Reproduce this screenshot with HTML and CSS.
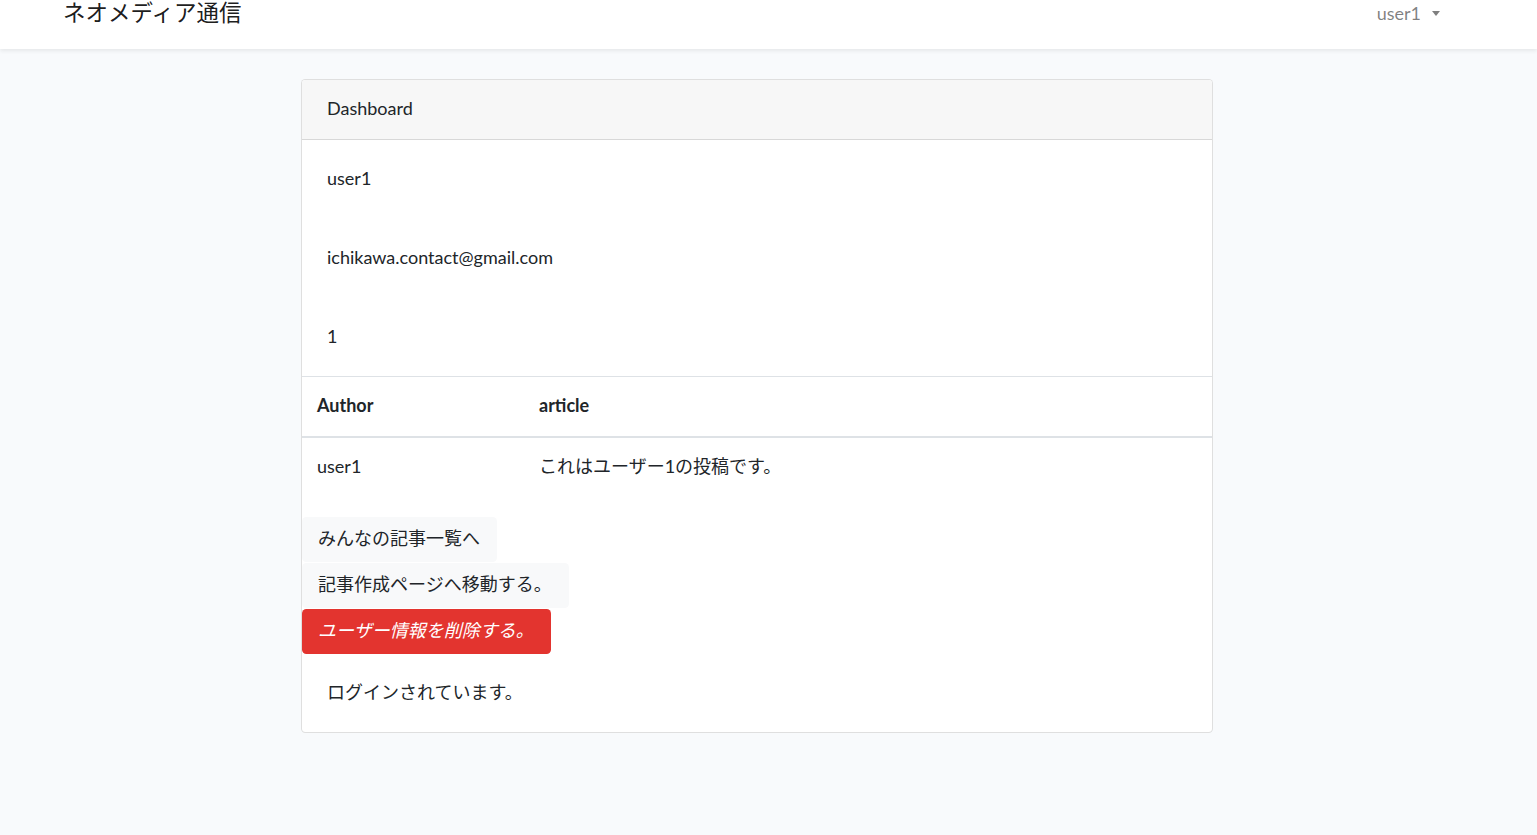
FILE: index.html
```html
<!DOCTYPE html>
<html lang="ja">
<head>
<meta charset="utf-8">
<title>ネオメディア通信</title>
<link rel="stylesheet" href="styles.css">
</head>
<body>
<nav class="navbar">
  <a class="brand" href="#">ネオメディア通信</a>
  <div class="user-menu">
    <span class="user-name">user1</span>
    <span class="caret"></span>
  </div>
</nav>
<main class="main">
  <div class="card">
    <div class="card-header">Dashboard</div>
    <div class="card-body info">
      <div class="line">user1</div>
      <div class="line">ichikawa.contact@gmail.com</div>
      <div class="line">1</div>
    </div>
    <table class="table">
      <thead>
        <tr><th class="col-author">Author</th><th>article</th></tr>
      </thead>
      <tbody>
        <tr><td class="col-author">user1</td><td>これはユーザー1の投稿です。</td></tr>
      </tbody>
    </table>
    <div class="actions">
      <a class="btn btn-light" href="#">みんなの記事一覧へ</a>
      <a class="btn btn-light" href="#">記事作成ページへ移動する。</a>
      <button class="btn btn-danger" type="button">ユーザー情報を削除する。</button>
    </div>
    <div class="card-body status">
      <div class="line">ログインされています。</div>
    </div>
  </div>
</main>
</body>
</html>
```
FILE: styles.css
```css
* { box-sizing: border-box; }
html, body { margin: 0; padding: 0; }
body {
  background: #f8fafc;
  font-family: "Lato", "Noto Sans CJK JP", sans-serif;
  font-size: 18px;
  line-height: 26px;
  color: #212529;
}
a { text-decoration: none; color: inherit; }

.navbar {
  height: 49px;
  background: #fff;
  box-shadow: 0 2px 4px rgba(0,0,0,0.075);
  display: flex;
  justify-content: space-between;
  align-items: flex-start;
  padding: 0 97px 0 63px;
}
.brand {
  font-size: 22.5px;
  line-height: 26px;
  color: rgba(0,0,0,0.9);
}
.user-menu {
  display: flex;
  align-items: center;
  gap: 11px;
  padding-top: 0;
  color: rgba(0,0,0,0.5);
  font-size: 18px;
  line-height: 26px;
}
.caret {
  width: 0; height: 0;
  border-left: 4.5px solid transparent;
  border-right: 4.5px solid transparent;
  border-top: 5px solid rgba(0,0,0,0.5);
  margin-top: 0;
}

.main { padding: 30px 0 40px 301px; }
.card {
  width: 912px;
  background: #fff;
  border: 1px solid rgba(0,0,0,0.125);
  border-radius: 4.4px;
  overflow: hidden;
}
.card-header {
  background: #f7f7f7;
  border-bottom: 1px solid rgba(0,0,0,0.125);
  height: 60px;
  padding: 15px 25px 0;
}
.card-body { padding: 0 25px; }
.info {
  display: flex;
  flex-direction: column;
  gap: 53px;
  padding-top: 25px;
  padding-bottom: 27px;
}
.line { line-height: 26px; }

.table {
  width: 100%;
  border-collapse: collapse;
  margin-bottom: 20px;
}
.table th, .table td {
  text-align: left;
  line-height: 26px;
  border-top: 1px solid #dee2e6;
  vertical-align: top;
}
.table th { font-weight: 700; border-bottom: 2px solid #dee2e6; padding: 15px 15px 18px; }
.table tbody td { border-top: none; padding: 15px 15px 18px; }
.col-author { width: 222px; }

.actions {
  display: flex;
  flex-direction: column;
  align-items: flex-start;
  gap: 1px;
}
.btn {
  display: inline-flex;
  align-items: center;
  height: 45px;
  padding: 0 17px 3px 16px;
  border: none;
  border-radius: 4.4px;
  font-family: inherit;
  font-size: 18px;
  line-height: 26px;
  cursor: pointer;
}
.btn-light { background: #f8f9fa; color: #212529; }
.btn-danger { background: #e3342f; color: #fff; font-style: italic; }

.status {
  padding-top: 25px;
  padding-bottom: 27px;
}
```
